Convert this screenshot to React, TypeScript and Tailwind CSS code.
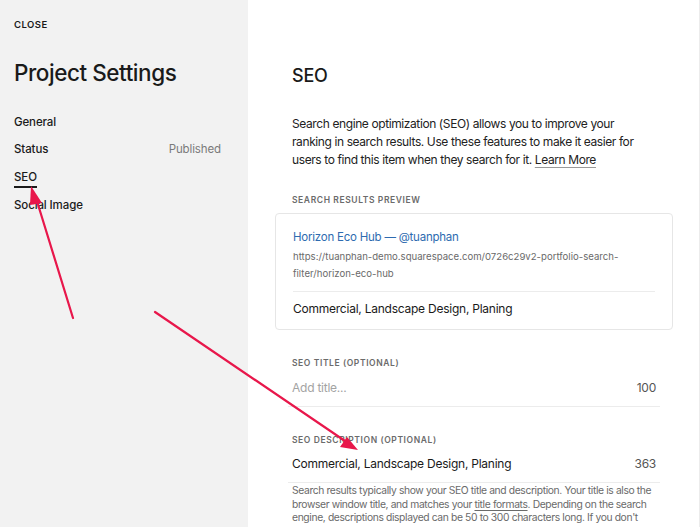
import React from "react";

const label = "text-[8.5px] font-semibold tracking-[0.07em] text-[#6b6b6b] uppercase whitespace-nowrap";

export default function App() {
  return (
    <div
      className="relative flex w-[700px] h-[527px] overflow-hidden bg-white text-[#1a1a1a]"
      style={{ fontFamily: "Inter, 'Liberation Sans', sans-serif" }}
    >
      {/* Left panel */}
      <aside className="w-[248px] shrink-0 bg-[#f2f2f2] pl-[14px] pr-[27px] pt-[18px]">
        <div className="text-[9.5px] leading-[14px] font-semibold tracking-[0.05em]">CLOSE</div>
        <h1 className="mt-[26px] text-[22.5px] leading-[30px] font-medium tracking-[-0.02em]">Project Settings</h1>
        <nav className="mt-[21px] flex flex-col text-[11.5px] font-medium tracking-[-0.01em]">
          <div className="h-[27px] flex items-center">General</div>
          <div className="h-[27px] flex items-center justify-between">
            <span>Status</span>
            <span className="text-[#7a7a7a] font-normal">Published</span>
          </div>
          <div className="h-[27px] flex items-center">
            <span className="border-b-2 border-[#1a1a1a] leading-[16px] pb-[1px] translate-y-[2px]">SEO</span>
          </div>
          <div className="h-[29px] flex items-center pt-[2px]">Social Image</div>
        </nav>
      </aside>

      {/* Right panel */}
      <main className="flex-1 border-r border-[#ececec] pl-[44px] pr-[43px]">
        <h2 className="mt-[64px] text-[18px] leading-[24px] font-medium tracking-[-0.01em]">SEO</h2>
        <p className="mt-[27px] text-[12px] leading-[18px] text-[#222] tracking-[-0.4px] whitespace-nowrap">
          Search engine optimization (SEO) allows you to improve your
          <br />
          ranking in search results. Use these features to make it easier for
          <br />
          users to find this item when they search for it.{" "}
          <span className="underline underline-offset-[3px] decoration-[#999]">Learn More</span>
        </p>

        <div className={`${label} mt-[25px]`}>Search Results Preview</div>
        <div className="mt-[6px] -mx-[17px] rounded-[4px] border border-[#e6e6e6] px-[17px] pt-[14px] pb-[11px]">
          <div className="text-[11.5px] leading-[18px] text-[#2e6bb0] tracking-[-0.02em]">Horizon Eco Hub — @tuanphan</div>
          <div className="mt-[2px] text-[9.6px] leading-[17px] text-[#6a6a6a] whitespace-nowrap">
            https://tuanphan-demo.squarespace.com/0726c29v2-portfolio-search-
            <br />
            filter/horizon-eco-hub
          </div>
          <div className="mt-[9px] border-t border-[#ececec]" />
          <div className="mt-[8px] text-[12px] leading-[18px] tracking-[-0.02em]">Commercial, Landscape Design, Planing</div>
        </div>

        <div className={`${label} mt-[27px]`}>SEO Title (Optional)</div>
        <div className="-mx-[4px] mt-[9px] px-[4px] flex items-center justify-between border-b border-[#ececec] pb-[9px] text-[12px] leading-[18px] tracking-[-0.02em]">
          <span className="text-[#a3a3a3]">Add title...</span>
          <span className="text-[#555]">100</span>
        </div>

        <div className={`${label} mt-[27px]`}>SEO Description (Optional)</div>
        <div className="-mx-[4px] mt-[9px] px-[4px] flex items-center justify-between border-b border-[#ececec] pb-[9px] text-[12px] leading-[18px] tracking-[-0.02em]">
          <span>Commercial, Landscape Design, Planing</span>
          <span className="text-[#555]">363</span>
        </div>
        <p className="mt-[1px] text-[10.3px] leading-[13.5px] text-[#6a6a6a] tracking-[-0.37px] whitespace-nowrap">
          Search results typically show your SEO title and description. Your title is also the
          <br />
          browser window title, and matches your{" "}
          <span className="underline underline-offset-2">title formats</span>. Depending on the search
          <br />
          engine, descriptions displayed can be 50 to 300 characters long. If you don't
          <br />
          add a title or description, search engines will use this item's title and content.
        </p>
      </main>

      {/* Annotation arrows */}
      <svg className="pointer-events-none absolute inset-0" width="700" height="527" viewBox="0 0 700 527">
        <g stroke="#e8174b" strokeWidth="2.2" strokeLinecap="round" fill="#e8174b">
          <line x1="73" y1="318" x2="36" y2="198" />
          <polygon points="31,186 42,203 30,205" stroke="none" />
          <line x1="155" y1="312" x2="348" y2="443" />
          <polygon points="358,450 340,447 347,437" stroke="none" />
        </g>
      </svg>
    </div>
  );
}
